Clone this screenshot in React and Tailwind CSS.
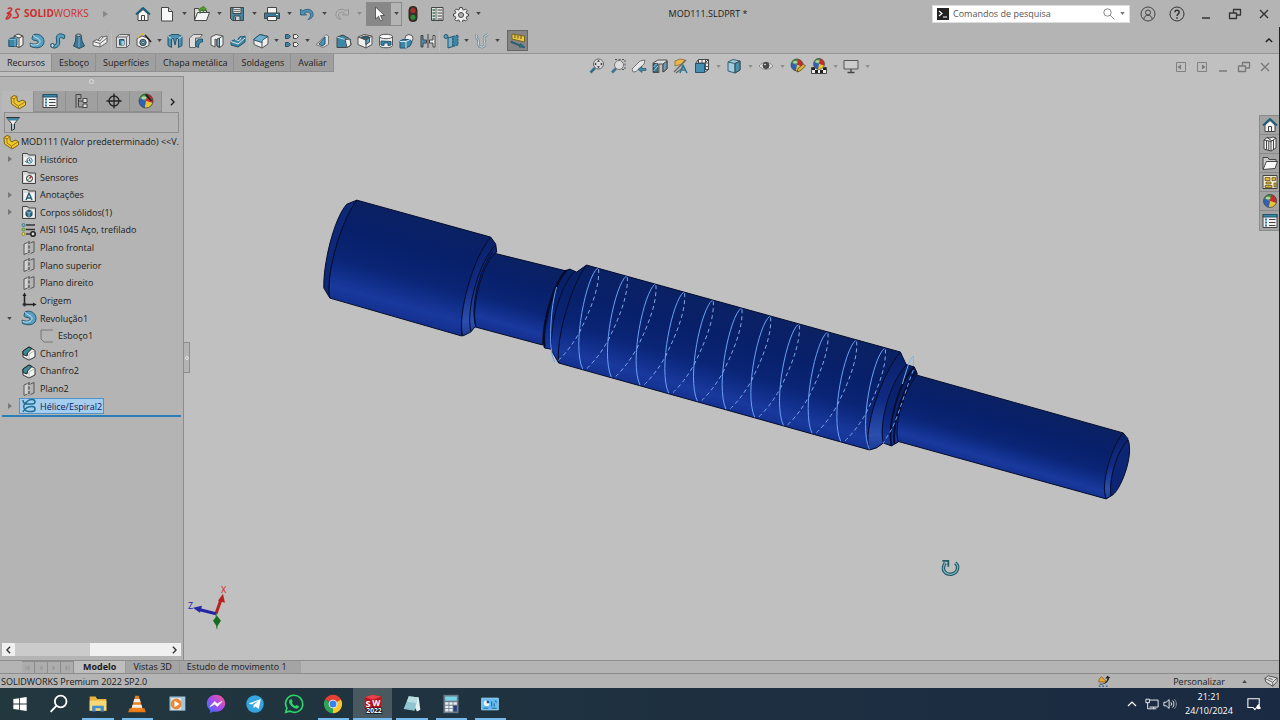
import React, { useState } from "react";

const Icon = ({ children, className = "h-4 w-4", viewBox = "0 0 16 16" }) => (
  <svg
    viewBox={viewBox}
    className={`shrink-0 ${className}`}
    fill="none"
    stroke="#444"
    strokeWidth="1"
    strokeLinejoin="round"
    aria-hidden="true"
  >
    {children}
  </svg>
);

const Caret = ({ faded }) => (
  <svg viewBox="0 0 6 4" className={`w-[5px] h-[3px] ${faded ? "opacity-40" : ""}`} aria-hidden="true">
    <path d="M0 0h6L3 4z" fill="#444" />
  </svg>
);

const ColorBall = ({ cx = 8, cy = 8, r = 6.5 }) => (
  <g transform={`translate(${cx} ${cy}) scale(${r})`} stroke="none">
    <path d="M0 0L-.9-.4A1 1 0 0 1 .2-1z" fill="#3a9a3a" />
    <path d="M0 0L.2-1A1 1 0 0 1 .95 .3z" fill="#c92a2a" />
    <path d="M0 0L.95 .3A1 1 0 0 1-.2 1z" fill="#e8c52f" />
    <path d="M0 0L-.2 1A1 1 0 0 1-.9-.4z" fill="#2f62b5" />
    <circle r="1" stroke="#444" strokeWidth=".12" />
    <ellipse cx="-.3" cy="-.45" rx=".35" ry=".22" fill="#fff" opacity=".6" />
  </g>
);

const Folder = ({ children }) => (
  <Icon>
    <path d="M1.500 14.500v-12h5l1 1.500h7v10.500z" fill="#d9d9d9" stroke="#444" />
    <path d="M3 6h10v7H3z" fill="#f2f2f2" stroke="none" />
    {children}
  </Icon>
);

const icons = {
  home: (
    <Icon>
      <path d="M3 8v6.500h10V8L8 3.500z" fill="#f4f4f4" />
      <path d="M1 8.500L8 2l7 6.500" stroke="#1c5f78" strokeWidth="2" />
      <path d="M6.500 14.500v-5h3v5" />
    </Icon>
  ),
  newDoc: (
    <Icon>
      <path d="M2.500 1.500h7l4 4v9.500h-11z" fill="#f7f7f7" />
      <path d="M9.500 1.500v4h4" fill="#ccc" />
    </Icon>
  ),
  open: (
    <Icon>
      <path d="M.5 14.500v-12h4l1 2h7v3" fill="#dedede" />
      <path d="M.5 14.500l3-8h12l-3 8z" fill="#f5f5f5" />
      <path d="M5 5c0-3 2-3.500 4-3.500V0l3.500 3L9 6V4.200C7 4 6 5 6 8" fill="#4f9d2f" stroke="#2b6b18" strokeWidth=".6" />
    </Icon>
  ),
  save: (
    <Icon>
      <path d="M1.500 1.500h13v13h-11l-2-2z" fill="#4387a6" />
      <path d="M4 1.500h8v6H4z" fill="#ddd" />
      <path d="M5 10h6v4.500H5z" fill="#c5d5dc" />
      <path d="M5 3.500h6M5 5.500h6" stroke="#777" />
      <path d="M6.500 11v3" />
    </Icon>
  ),
  print: (
    <Icon>
      <path d="M3.500 7V1.500h9V7" fill="#f4f4f4" />
      <path d="M.5 7h15v5.500H.5z" fill="#377c9b" />
      <path d="M3.500 10.500h9v4h-9z" fill="#fafafa" />
      <path d="M12 8.500h2" stroke="#fff" />
    </Icon>
  ),
  undo: (
    <Icon>
      <path d="M1.500 3v6h6L5.500 7c3-2 6-.5 6 2 0 2-1 3-2.500 4.500 4-1 5.500-3 5-6C13 3 8 2 3.500 5z" fill="#4c93b5" stroke="#26566f" strokeWidth=".8" />
    </Icon>
  ),
  redo: (
    <Icon className="h-4 w-4 opacity-35">
      <path d="M14.500 3v6h-6l2-2c-3-2-6-.5-6 2 0 2 1 3 2.500 4.500-4-1-5.500-3-5-6C3 3 8 2 12.500 5z" fill="#bbb" stroke="#555" />
    </Icon>
  ),
  pointer: (
    <Icon>
      <path d="M4.500 1v12l3-2.800L9.500 15l2-.8-2-4.700h4z" fill="#fff" strokeWidth=".8" />
    </Icon>
  ),
  traffic: (
    <Icon>
      <rect x="4" y=".5" width="8" height="15" rx="3.500" fill="#3b3028" stroke="#2c2620" />
      <circle cx="8" cy="4.500" r="2.500" fill="#a8322a" stroke="none" />
      <circle cx="8" cy="11.300" r="2.500" fill="#2d8a36" stroke="none" />
    </Icon>
  ),
  list: (
    <Icon>
      <path d="M2.500 1.500h11.500v13H2.500z" fill="#e4e4e4" />
      <path d="M7 1.500v13" stroke="#666" />
      <path d="M3.500 4h2.500M3.500 7h2.500M3.500 10h2.500M3.500 13h2.500" stroke="#277451" strokeWidth="1.500" />
      <path d="M8.500 4H13M8.500 7H13M8.500 10H13M8.500 13H13" stroke="#444" />
    </Icon>
  ),
  gear: (
    <Icon>
      <path d="M6.800 1.500h2.400l.4 1.900 1.300.6 1.700-1 1.600 1.700-1 1.600.5 1.300 1.800.4v2l-1.800.5-.5 1.300 1 1.600-1.600 1.600-1.700-1-1.300.5-.4 1.900H6.800l-.5-1.900-1.200-.5-1.700 1-1.600-1.600 1-1.600-.6-1.300L.5 10V8l1.700-.4.6-1.300-1-1.600L3.400 3l1.700 1 1.200-.6z" fill="#eee" stroke="#444" />
      <circle cx="8" cy="9" r="2.500" fill="#b5b5b5" stroke="#444" />
    </Icon>
  ),
  extrude: (
    <Icon>
      <path d="M6 3l4-2 5 2v9l-4 2.500-5-2z" fill="#efefef" />
      <path d="M11 5v9.500M11 5l4-2M6 3l5 2" />
      <path d="M.8 6.500L3 5h6v7l-2 1.500H.8z" fill="#3c86a6" stroke="#23556c" />
      <path d="M.8 6.500H7v7M7 6.500L9 5" stroke="#8cc4dc" strokeWidth=".8" />
    </Icon>
  ),
  revolve: (
    <Icon>
      <path d="M4 2C9-.5 15 3 15 8.500S9 16.500 1.500 13.500L1 10c4 2 8 1 8-1S3 8 3 5.500z" fill="#58a0c2" stroke="#23556c" />
      <path d="M4 2c1 3 7 3 7 6.500 0 3-5 4.500-9.500 3" stroke="#c5e3f0" />
    </Icon>
  ),
  sweep: (
    <Icon>
      <path d="M1 11c3-1 3 2 5 0s-1-6 1-8.500S12 .5 15 2.500L14 6c-2-1.500-4-2-4.500-.5S11 11 8 13.500 3 15 1 14z" fill="#58a0c2" stroke="#23556c" />
      <ellipse cx="2.500" cy="12.500" rx="1.700" ry="2" fill="#bde0ef" stroke="#23556c" />
    </Icon>
  ),
  loft: (
    <Icon>
      <path d="M5 2h5l1 6 2.500 5L8 15.500 2.500 13 4.500 8z" fill="#3d7795" stroke="#274f63" />
      <ellipse cx="7.500" cy="2.200" rx="2.700" ry="1.200" fill="#a9cfdf" />
      <path d="M8 4v10" stroke="#7fb3ca" />
    </Icon>
  ),
  boundary: (
    <Icon>
      <path d="M1 8.500l4-2 1 .8 3-3.800 2 .5 4-1v6.500l-7 4.500-7-1.500z" fill="#ededed" stroke="#666" />
      <path d="M1 8.500l7 2L15 5M8 10.500V14M6 7.300l2 .7 3-4" stroke="#666" />
    </Icon>
  ),
  cutExtrude: (
    <Icon>
      <path d="M1.500 4l3-2.500h10v10l-3 3h-10z" fill="#ddd" stroke="#666" />
      <path d="M1.500 4h10v10.500M11.500 4l3-2.500" stroke="#666" />
      <path d="M4.500 6.500h4.500V12H4.500z" fill="#3c86a6" stroke="#23556c" />
      <path d="M6.500 8h2.500v4H6.500z" fill="#a5cfe0" stroke="none" />
    </Icon>
  ),
  holeWizard: (
    <Icon>
      <path d="M1 5.500L6 3l7 2.500v7L7 15l-6-2.500z" fill="#eee" stroke="#555" />
      <circle cx="7" cy="9.500" r="3.200" fill="#4c93b5" />
      <circle cx="7" cy="9.500" r="1.200" fill="#fff" />
      <path d="M9 2l6 7" stroke="#222" strokeWidth="1.600" />
      <path d="M3 1l1 1.500M6.500 0v2M1 4h2" stroke="#e6b72a" strokeWidth="1.500" />
    </Icon>
  ),
  cutRevolve: (
    <Icon>
      <path d="M1 3.500L5 1.500h6l4 2v9l-3.500 2V5.500h-2L8 12 6.500 5.500h-2v9L1 12.500z" fill="#4c93b5" stroke="#23556c" />
      <path d="M1 3.500l3.500 2M15 3.500l-3.500 2" stroke="#cfe8f2" />
    </Icon>
  ),
  cutSweep: (
    <Icon>
      <path d="M1.500 5l4-3.500h9l-3 3.500h-4v9.500h-6z" fill="#ddd" stroke="#666" />
      <path d="M7.500 13c0-5 2-7 7-7v3c-2.500 0-4 1.500-4 5.500z" fill="#3c86a6" stroke="#23556c" />
    </Icon>
  ),
  cutLoft: (
    <Icon>
      <path d="M2 4l5-2.500L14 3v9l-3.500 2.500L8 13V7L6 6v8l-4-2z" fill="#eee" stroke="#555" />
      <path d="M10.500 5v9.500M10.500 5L14 3" stroke="#555" />
      <path d="M8 6l2.500-1v9.500L8 13z" fill="#77aec6" />
    </Icon>
  ),
  cutBoundary: (
    <Icon>
      <path d="M1 8.500l4-2 2 1 3-4 2 .5 3-1v6l-7 5-7-2z" fill="#3c86a6" stroke="#23556c" />
      <path d="M1 8.500L8 11l7-6" stroke="#e6e6e6" />
      <path d="M5 6.500l4 1.200 2-3" stroke="#ddd" />
    </Icon>
  ),
  fillet: (
    <Icon>
      <path d="M1 6l6-4.500 8 2V11l-6 4-8-3.500z" fill="#eee" stroke="#555" />
      <path d="M1 6l6-4.500 8 2L11 6c-1.500 1-2 2-2 3.500L1 7z" fill="#6fb0cd" stroke="#23556c" />
      <path d="M9 9v6" stroke="#555" />
    </Icon>
  ),
  pattern: (
    <Icon>
      <path d="M1.500 1.500h3l2 2-2 2h-3zM1.500 9.500h3l2 2-2 2h-3z" fill="#3c86a6" />
      <path d="M9.500 1.500h3l2 2-2 2h-3zM9.500 9.500h3l2 2-2 2h-3z" fill="#eee" />
    </Icon>
  ),
  rib: (
    <Icon>
      <path d="M1 11.500L4 9l7-7.500 2.500 1.500v8.500L8 14.500z" fill="#ddd" stroke="#777" />
      <path d="M4 11l6-7v7l-3 2z" fill="#4c93b5" stroke="#23556c" />
    </Icon>
  ),
  draft: (
    <Icon>
      <path d="M1 4l6-2 7 4 1 6-4 2.500H1z" fill="#3c86a6" stroke="#444" />
      <path d="M1 4l8 2.500L14 6M9 6.500l2 8" stroke="#b9dcea" />
      <path d="M9 6.500L14 6l1 6-4 2.500z" fill="#eee" />
    </Icon>
  ),
  shell: (
    <Icon>
      <path d="M1 4l6-2.500L15 3v8.500L9 15l-8-3.500z" fill="#eee" stroke="#555" />
      <path d="M3.500 4.500L8 3l4.500 1v5L9 7z" fill="#22617c" />
      <path d="M9 7v8M1 4l8 3 6-4" stroke="#555" />
      <path d="M9 7l3.500-2.500V9L9 11.500z" fill="#5aa7c9" />
    </Icon>
  ),
  wrap: (
    <Icon>
      <path d="M1.500 3.500v9c0 3 13 3 13 0v-9" fill="#eee" stroke="#555" />
      <ellipse cx="8" cy="3.500" rx="6.500" ry="2.200" fill="#fafafa" stroke="#555" />
      <path d="M3 8l10 .5V12l-3 .5V10H6v2.500L3 12z" fill="#3c86a6" stroke="#23556c" />
    </Icon>
  ),
  intersect: (
    <Icon>
      <circle cx="10" cy="5.500" r="4" fill="#eee" stroke="#555" />
      <path d="M1 8l3-1.500h7L13 9l-2 4-4 2H1z" fill="#3c86a6" stroke="#23556c" />
      <path d="M1 8.500h6V15M7 8.500l4-2" stroke="#d3eaf4" />
    </Icon>
  ),
  mirror: (
    <Icon>
      <path d="M1 2.500h2V7h3.500v3H3v4H1z" fill="#4c93b5" />
      <path d="M15 2.500h-2V7H9.500v3H13v4h2z" fill="#eee" />
      <path d="M8 1v14" />
    </Icon>
  ),
  refGeometry: (
    <Icon>
      <circle cx="3" cy="3.500" r="2" fill="#58a0c2" stroke="#23556c" />
      <path d="M5 5l5-1.500v10L5 15z" fill="#77b1cb" stroke="#23556c" />
      <path d="M10 3.500L15 2v10l-5 1.500z" fill="#3c86a6" stroke="#23556c" strokeDasharray="2 1" />
    </Icon>
  ),
  curves: (
    <Icon>
      <path d="M3 1.500c-3 4 3 4 1.500 8.500s7 6 6.500 1-3-7 3-9.500" stroke="#6f8792" strokeWidth="2.500" />
      <path d="M3 1.500c-3 4 3 4 1.500 8.500s7 6 6.500 1-3-7 3-9.500" stroke="#e2e8ea" strokeWidth="1" />
    </Icon>
  ),
  instant3d: (
    <Icon>
      <path d="M2 1l12.500 2v6L2 6z" fill="#eac849" stroke="#7b621a" />
      <path d="M5 2v3M8 2.500v3M11 3v3" stroke="#5c4a14" />
      <path d="M1 8l9 4 .5-1.500 4.500 4-6-.5.500-1.200L1 9.500z" fill="#28708f" stroke="#174a60" strokeWidth=".6" />
    </Icon>
  ),
  zoomFit: (
    <Icon>
      <circle cx="9.500" cy="6" r="5" fill="#dcdcdc" stroke="#666" />
      <path d="M6 10l-4.500 4.500" stroke="#2e6d88" strokeWidth="2.500" />
      <path d="M9.500 1.800l1.500 2H8zM9.500 10.200l1.500-2H8zM5.300 6l2-1.500v3zM13.700 6l-2-1.500v3z" fill="#333" stroke="none" />
    </Icon>
  ),
  zoomArea: (
    <Icon>
      <path d="M5 1.500h10v10H9" stroke="#555" strokeDasharray="2 1.500" />
      <circle cx="9" cy="7" r="4.500" fill="#dcdcdc" stroke="#777" />
      <path d="M6 10.500L2 14.500" stroke="#3d7189" strokeWidth="2.500" />
    </Icon>
  ),
  prevView: (
    <Icon>
      <path d="M1 11l8-8 5-1-1 4-8 7.500-3 .5z" fill="#e7e7e7" stroke="#777" />
      <path d="M7 11.500l4-3v2h4v2h-4v2z" fill="#3c86a6" stroke="#23556c" strokeWidth=".6" />
    </Icon>
  ),
  section: (
    <Icon>
      <path d="M1 5l5-3h9v9l-4 3V6H7v8.500H1z" fill="#ddd" stroke="#555" />
      <path d="M1.500 5.500H6v8.500H1.500z" fill="#3f7d99" />
      <path d="M11 6l4-3v8l-4 3z" fill="#6a9db4" />
      <path d="M1.500 9L5 5.500M1.500 13L6 8" stroke="#9bc9dc" />
    </Icon>
  ),
  annotationView: (
    <Icon>
      <path d="M2 3l5-2 5 1-3 4-7 2z" fill="#ebb64a" stroke="#9b7b3a" />
      <path d="M1 14l8-8 4-4M3 15l8-6" stroke="#666" strokeWidth="1.300" />
      <path d="M7 15l3-8 4 8M8.500 12h4.500" stroke="#2f7394" strokeWidth="1.500" />
    </Icon>
  ),
  orientation: (
    <Icon>
      <path d="M4.500 1.500h10v10h-10z" fill="#eee" />
      <path d="M8 1.500v10M11.500 1.500v10M4.500 5h10M4.500 8.500h10" stroke="#555" />
      <path d="M1.500 5.500h9v9h-9z" fill="#4590b2" stroke="#23556c" />
      <path d="M1.500 5.500l3-4M10.500 5.500l4-4M10.500 14.500l4-3" />
    </Icon>
  ),
  displayStyle: (
    <Icon>
      <path d="M2 4l5-2.500L14 3v9l-5 3-7-2z" fill="#9fcbdd" stroke="#3a5f70" />
      <path d="M9 5.500L14 3v9l-5 3z" fill="#4a8fae" />
      <path d="M2 4l7 1.500V15M9 5.500L14 3" stroke="#3a5f70" />
    </Icon>
  ),
  eye: (
    <Icon>
      <path d="M1 8c4-5 10-5 14 0-4 4.500-10 4.500-14 0z" fill="#ddd" stroke="#888" />
      <circle cx="8" cy="7.500" r="3" fill="#4b4b4b" />
      <circle cx="7" cy="6.500" r=".8" fill="#fff" stroke="none" />
    </Icon>
  ),
  appearance: (
    <Icon>
      <ColorBall cx={7} cy={7} r={6} />
      <path d="M7 14l1-3.500L13.500 6l2 2-5.500 5z" fill="#d9b53f" stroke="#594618" strokeWidth=".8" />
    </Icon>
  ),
  scene: (
    <Icon>
      <path d="M.5 9.500h15v6H.5z" fill="#eee" />
      <path d="M1 10h3v2H1zM12 10h3v2h-3zM4 12h3v3H4zM9 12h3v3H9z" fill="#222" stroke="none" />
      <ColorBall cx={8} cy={6} r={5.500} />
    </Icon>
  ),
  monitor: (
    <Icon>
      <path d="M1 2.500h14v8.500H1z" fill="#ccc" stroke="#555" />
      <path d="M8 11v3M4.500 14.500h7" stroke="#444" strokeWidth="1.300" />
    </Icon>
  ),
  part: (
    <Icon>
      <path d="M1 3.500L4 1.500l3 1v4l2 1.500 3-2 3.500 1.500V11L9 15 1.500 10z" fill="#f0c92e" stroke="#7b611a" />
      <path d="M1 3.500l3 1.500v4l4.500 3V15M4 5l3-2.500M8.500 12l7-4.500" stroke="#987a1d" />
    </Icon>
  ),
  propertyTab: (
    <Icon>
      <path d="M1 1.500h14v13H1z" fill="#f0f0f0" />
      <path d="M1 1.500h14v2.500H1z" fill="#3c86a6" stroke="#23556c" />
      <path d="M3 6.500h2M3 9.500h2M3 12.500h2" stroke="#2f7d9d" strokeWidth="1.800" />
      <path d="M7 6.500h6.500M7 9.500h6.500M7 12.500h6.500" />
    </Icon>
  ),
  configTab: (
    <Icon>
      <path d="M2 1.500h5v4H4.500M4.500 5v9H9M4.500 8H10M2 1.500V15" stroke="#444" />
      <path d="M9 5.500h4v4H9zM9 11h4v3.500H9z" fill="#e3e3e3" stroke="#444" />
    </Icon>
  ),
  targetTab: (
    <Icon>
      <circle cx="8" cy="8" r="5" stroke="#222" strokeWidth="1.300" />
      <path d="M8 .5v15M.5 8h15" stroke="#222" strokeWidth="1.300" />
    </Icon>
  ),
  ball: (
    <Icon>
      <ColorBall />
    </Icon>
  ),
  displayTab: (
    <Icon>
      <ColorBall r={7} />
      <path d="M7 2l2-1 5.500 7-2.500-.5z" fill="#222" stroke="none" />
    </Icon>
  ),
  funnel: (
    <Icon>
      <path d="M1.500 2.500h13l-5 6V14l-3 1.500v-7z" fill="#f1f1f1" stroke="#333" />
      <path d="M2 3h12l-2 2.500H4z" fill="#3c86a6" stroke="none" />
      <path d="M8 9v5" stroke="#4c93b5" />
    </Icon>
  ),
  history: (
    <Folder>
      <circle cx="8.500" cy="9.500" r="2.700" stroke="#2d738f" />
      <path d="M4 10l2 1.500 1-2.500M8.500 8v2H10" stroke="#2d738f" />
    </Folder>
  ),
  sensor: (
    <Folder>
      <circle cx="8.500" cy="9.500" r="3" stroke="#222" />
      <path d="M8.500 9.500L10.500 7" stroke="#b0302a" strokeWidth="1.500" />
      <path d="M6 11.500l2-2" stroke="#2f8a45" />
    </Folder>
  ),
  annotations: (
    <Folder>
      <path d="M5 13l3-7 3 7M6 11h4" stroke="#215d77" strokeWidth="1.400" />
    </Folder>
  ),
  solids: (
    <Folder>
      <path d="M5 7.500L8 6l3 1.500v4L8 13l-3-1.500z" fill="#2c7290" stroke="#1d3d4c" />
      <path d="M5 7.500L8 9l3-1.500M8 9v4" stroke="#a8d1e1" strokeWidth=".7" />
    </Folder>
  ),
  material: (
    <Icon>
      <path d="M5 3h9M5 7.500h9" stroke="#333" strokeWidth="1.400" />
      <path d="M5 12h4" stroke="#333" strokeWidth="1.400" />
      <circle cx="2.500" cy="3" r="1.500" fill="#7eb7c9" stroke="#46808f" />
      <circle cx="2.500" cy="7.500" r="1.500" fill="#97c276" stroke="#5c8941" />
      <circle cx="2.500" cy="12" r="1.500" fill="#e7dc57" stroke="#978c27" />
      <circle cx="12" cy="12" r="2.200" fill="#ddd" stroke="#222" strokeWidth="1.600" />
    </Icon>
  ),
  plane: (
    <Icon>
      <path d="M6.500 2.500L3 4v10.500l3.500-1.500" fill="#d3d3d3" stroke="#555" />
      <path d="M9.500 3L13 1.500V12l-3.500 1.500" stroke="#555" />
      <path d="M8 1v14" strokeDasharray="3 1.500" stroke="#333" />
    </Icon>
  ),
  origin: (
    <Icon>
      <path d="M3.500 3v9.500H13" stroke="#222" strokeWidth="1.500" />
      <path d="M1.500 4l2-3.500 2 3.500zM12 10.500l3.500 2-3.500 2z" fill="#222" stroke="none" />
      <circle cx="3.500" cy="12.500" r="1.500" fill="#222" />
    </Icon>
  ),
  sketch: (
    <Icon>
      <path d="M14 2H2v9l3 3h9" stroke="#777" />
    </Icon>
  ),
  chamfer: (
    <Icon>
      <path d="M2 6l6-4 6 3.500V12l-6 3-6-3z" fill="#f3f3f3" stroke="#333" />
      <path d="M2 6l6-4 3 1.500L6.500 8l-.5 3-4-1.500z" fill="#3c8b97" stroke="#222" />
      <path d="M8 9l6-3.500M8 9v6" stroke="#999" strokeWidth=".7" />
    </Icon>
  ),
  helix: (
    <Icon>
      <path d="M2 2c0 3 2 4 4 4h5c4 0 4-4.500 0-4.500S5 4 3 7M3 7c-1 3 1 6.500 4 6.500h4c4 0 4-5 0-5S4 10 2 14" stroke="#1f6f94" strokeWidth="1.500" />
    </Icon>
  ),
  books: (
    <Icon>
      <path d="M2 4l3-2.500 3 .5 3-1 3 1v10l-5 3-7-2z" fill="#f2f2f2" />
      <path d="M2 4l7 1.500V15M9 5.500L14 2M4.500 4.500v9.500M6.800 5v9.500M5 1.500l5 3.500M11.500 4v9.500" />
    </Icon>
  ),
  folderOpen: (
    <Icon>
      <path d="M1 14V2.500h5l1 2h7V7" fill="#ccc" />
      <path d="M1 14.500L4.500 6.500h11L13 13.500z" fill="#fafafa" />
    </Icon>
  ),
  palette: (
    <Icon>
      <path d="M1 1.500h14v13H1z" fill="#f4ecd0" />
      <path d="M3 3.500h5v3H3zM10 3.500h3.500v3H10zM4 8h5v2H4zM3 11.500h7v2H3zM12 9h2v4h-2z" fill="#dcb73a" stroke="#59491c" strokeWidth=".7" />
    </Icon>
  ),
  user: (
    <Icon>
      <circle cx="8" cy="8" r="7" stroke="#444" />
      <circle cx="8" cy="6.500" r="2.500" stroke="#444" />
      <path d="M4 13c0-5 8-5 8 0" stroke="#444" />
    </Icon>
  ),
  help: (
    <Icon>
      <circle cx="8" cy="8" r="7" stroke="#333" />
      <path d="M6 6.300c0-3 4.200-2.500 4.200 0C10.200 8 8 8 8 10" stroke="#333" strokeWidth="1.500" />
      <path d="M8 11.200v1.500" stroke="#333" strokeWidth="1.500" />
    </Icon>
  ),
  min: (
    <Icon>
      <path d="M4 12h8" stroke="#333" strokeWidth="1.500" />
    </Icon>
  ),
  restore: (
    <Icon>
      <path d="M2.500 7h7v5.500h-7zM6.500 7V3.500h7V9h-4" stroke="#333" strokeWidth="1.300" />
    </Icon>
  ),
  close: (
    <Icon>
      <path d="M4 4l8 8M12 4l-8 8" stroke="#333" strokeWidth="1.400" />
    </Icon>
  ),
  paneLeft: (
    <Icon>
      <path d="M3.500 3.500h9v9h-9z" />
      <path d="M8 5.500v5L4.500 8z" fill="#333" stroke="none" />
    </Icon>
  ),
  paneRight: (
    <Icon>
      <path d="M3.500 3.500h9v9h-9z" />
      <path d="M8 5.500v5L11.500 8z" fill="#333" stroke="none" />
    </Icon>
  ),
  rebuild: (
    <Icon className="h-[14px] w-[14px]">
      <path d="M2 9c0-3 1-4 3-6 1 2 2 1 3 3l3 3H2z" fill="#eda52c" stroke="#7a5012" strokeWidth=".8" />
      <path d="M3 11c5 1 8-2 9-6H9.500L12 2l3.500 2.500H14C13 9 9 12.500 3 12z" fill="#222" stroke="none" />
      <path d="M2 14h2M6 14h2M10 14h2" stroke="#2f70a5" strokeWidth="1.500" />
    </Icon>
  ),
  tag: (
    <Icon className="h-[14px] w-[14px]">
      <path d="M1 5l4-3 10 2.500v4L10 14 2 9z" fill="#ddd" stroke="#444" />
      <path d="M1 5l9 4.500V14M10 9.500l5-5M5 4.500l5 2" stroke="#555" />
    </Icon>
  ),
};

const quickAccess = [
  { icon: "newDoc", label: "Novo" },
  { icon: "open", label: "Abrir" },
  { icon: "save", label: "Salvar" },
  { icon: "print", label: "Imprimir" },
  { icon: "undo", label: "Desfazer" },
  { icon: "redo", label: "Refazer", faded: true },
];

const features = [
  ["extrude", "revolve", "sweep", "loft", "boundary", "|"],
  ["cutExtrude", "holeWizard", "v", "cutRevolve", "cutSweep", "cutLoft", "cutBoundary", "|"],
  ["fillet", "v", "pattern", "v", "rib", "draft", "shell", "wrap", "intersect", "mirror", "|"],
  ["refGeometry", "v", "curves", "v"],
].flat();

const headsUp = [
  "zoomFit", "zoomArea", "prevView", "section", "annotationView", "orientation", "v",
  "displayStyle", "v", "eye", "v", "appearance", "scene", "v", "monitor", "v",
];

const commandTabs = ["Recursos", "Esboço", "Superfícies", "Chapa metálica", "Soldagens", "Avaliar"];

const managerTabs = ["part", "propertyTab", "configTab", "targetTab", "displayTab"];

const tree = [
  { icon: "history", label: "Histórico", arrow: "closed" },
  { icon: "sensor", label: "Sensores" },
  { icon: "annotations", label: "Anotações", arrow: "closed" },
  { icon: "solids", label: "Corpos sólidos(1)", arrow: "closed" },
  { icon: "material", label: "AISI 1045 Aço, trefilado" },
  { icon: "plane", label: "Plano frontal" },
  { icon: "plane", label: "Plano superior" },
  { icon: "plane", label: "Plano direito" },
  { icon: "origin", label: "Origem" },
  { icon: "revolve", label: "Revolução1", arrow: "open" },
  { icon: "sketch", label: "Esboço1", child: true },
  { icon: "chamfer", label: "Chanfro1" },
  { icon: "chamfer", label: "Chanfro2" },
  { icon: "plane", label: "Plano2" },
  { icon: "helix", label: "Hélice/Espiral2", arrow: "closed" },
];

const taskPane = ["home", "books", "folderOpen", "palette", "ball", "propertyTab"];

const IconButton = ({ icon, label, className = "w-5" }) => (
  <button aria-label={label || icon} className={`flex h-5 shrink-0 items-center justify-center ${className}`}>
    {icons[icon]}
  </button>
);

const DropButton = ({ faded, className = "w-[14px]" }) => (
  <button aria-label="Mais opções" className={`flex h-5 shrink-0 items-center justify-center ${className}`}>
    <Caret faded={faded} />
  </button>
);

function TitleBar() {
  return (
    <header className="relative flex h-[27px] shrink-0 items-center bg-[#b4b4b4]">
      <div className="flex w-[133px] shrink-0 items-center pl-1 text-[#c9302c]">
        <svg viewBox="0 0 20 18" className="h-4 w-[18px]" fill="none" stroke="#c9302c" strokeWidth="1.700" aria-hidden="true">
          <path d="M4 3c4-2 6 0 3 3L3 8.500c5-1 6 1 3 4.500-2 2.500-5 2-3 0l3-4" />
          <path d="M18 4c-3-1.500-6 0-4.500 2.500l2 3c1.500 3-2 4.500-6 3.500" />
        </svg>
        <span className="ml-[2px] text-[10px]">
          <b>SOLID</b>WORKS
        </span>
        <svg viewBox="0 0 6 8" className="ml-[14px] h-2 w-[5px]" aria-hidden="true">
          <path d="M0 0l6 4-6 4z" fill="#888" />
        </svg>
      </div>
      <IconButton icon="home" label="Início" />
      <div className="ml-1 flex gap-px">
        {quickAccess.map((item) => (
          <div key={item.icon} className="flex">
            <IconButton icon={item.icon} label={item.label} />
            <DropButton faded={item.faded} />
          </div>
        ))}
      </div>
      <div className="flex h-6 border border-[#8a8a8a]">
        <button aria-label="Selecionar" className="flex w-6 items-center justify-center bg-[#888]">
          {icons.pointer}
        </button>
        <button aria-label="Opções de seleção" className="flex w-[10px] items-center justify-center">
          <Caret />
        </button>
      </div>
      <div className="ml-px flex gap-1">
        <IconButton icon="traffic" label="Reconstruir" />
        <IconButton icon="list" label="Propriedades do arquivo" />
        <IconButton icon="gear" label="Opções" />
      </div>
      <DropButton />
      <h1 className="pointer-events-none absolute inset-x-0 mr-[-136px] text-center text-[9px]">MOD111.SLDPRT *</h1>
      <div className="ml-auto flex h-[18px] w-[198px] shrink-0 items-center border border-[#ddd] bg-white px-1">
        <svg viewBox="0 0 12 12" className="h-3 w-3" fill="none" aria-hidden="true">
          <path d="M0 0h12v12H0z" fill="#222" />
          <path d="M2 3l3 2.500L2 8M6 9h4" stroke="#fff" strokeWidth="1.200" />
        </svg>
        <input
          aria-label="Comandos de pesquisa"
          placeholder="Comandos de pesquisa"
          className="ml-1 min-w-0 flex-1 bg-transparent text-[9px] text-[#444] outline-none placeholder:text-[#555]"
        />
        <svg viewBox="0 0 12 12" className="h-3 w-3" fill="none" stroke="#888" aria-hidden="true">
          <circle cx="4.500" cy="4.500" r="3.700" />
          <path d="M7.200 7.200L11.500 11.500" />
        </svg>
        <span className="ml-[5px]">
          <svg viewBox="0 0 6 4" className="h-[3px] w-[5px]" aria-hidden="true">
            <path d="M0 0h6L3 4z" fill="#777" />
          </svg>
        </span>
      </div>
      <div className="ml-[3px] mr-[2px] flex">
        {["user", "help", "min", "restore", "close"].map((name) => (
          <IconButton key={name} icon={name} className="w-[29px]" />
        ))}
      </div>
    </header>
  );
}

function FeatureBar() {
  return (
    <div className="flex h-[27px] shrink-0 items-center border-b border-[#949494] bg-[#b4b4b4] pl-[5px] pt-px">
      {features.map((name, i) => {
        if (name === "|") return <span key={i} className="h-5 w-[2px] border-r border-[#bfbfbf]" />;
        if (name === "v") return <DropButton key={i} className="w-[10px]" />;
        return <IconButton key={i} icon={name} className="w-[21px]" />;
      })}
      <button aria-label="Instant3D" className="ml-[5px] flex h-[21px] w-[21px] items-center justify-center border border-[#666] bg-[#858585]">
        {icons.instant3d}
      </button>
      <button aria-label="Recolher" className="ml-auto mr-[6px]">
        <svg viewBox="0 0 10 6" className="h-[5px] w-2" fill="none" stroke="#222" strokeWidth="1.800" aria-hidden="true">
          <path d="M1 5l4-4 4 4" />
        </svg>
      </button>
    </div>
  );
}

function CommandTabs() {
  const [active, setActive] = useState("Recursos");

  return (
    <div className="relative flex h-[22px] shrink-0 items-start justify-between bg-[#c0c0c0]">
      <nav className="flex h-[18px]">
        {commandTabs.map((tab) => (
          <button
            key={tab}
            onClick={() => setActive(tab)}
            className={`border-b border-r border-[#8f8f8f] pl-[7px] pr-[6px] text-[9px] leading-none font-medium text-[#222] ${
              active === tab ? "bg-[#b8b8b8]" : "bg-[#a0a0a0]"
            }`}
          >
            {tab}
          </button>
        ))}
      </nav>
      <div className="absolute inset-x-0 ml-[180px] flex justify-center pt-[2px]">
        {headsUp.map((name, i) =>
          name === "v" ? (
            <DropButton key={i} faded className="w-[11px]" />
          ) : (
            <IconButton key={i} icon={name} className="w-[21px]" />
          )
        )}
      </div>
      <div className="relative mr-1 flex pt-[3px] opacity-50">
        {["paneLeft", "paneRight", "min", "restore", "close"].map((name) => (
          <IconButton key={name} icon={name} label={`Documento ${name}`} className="w-[21px]" />
        ))}
      </div>
    </div>
  );
}

function TreeRow({ item, selected, onSelect }) {
  return (
    <li className={`flex items-center ${item.child ? "pl-[18px]" : ""}`}>
      <span className="flex w-[19px] shrink-0 justify-center">
        {item.arrow === "closed" && (
          <svg viewBox="0 0 4 6" className="h-[6px] w-1" aria-hidden="true">
            <path d="M0 0l4 3-4 3z" fill="#777" />
          </svg>
        )}
        {item.arrow === "open" && <Caret />}
      </span>
      <button
        onClick={onSelect}
        className={`flex h-4 items-center gap-[3px] whitespace-nowrap border px-px leading-none ${
          selected ? "border-[#4f93c8] bg-[#a5cdee] text-[#10185c]" : "border-transparent"
        }`}
      >
        {icons[item.icon]}
        {item.label}
      </button>
    </li>
  );
}

function FeatureManager() {
  const [selected, setSelected] = useState("Hélice/Espiral2");

  return (
    <aside className="flex w-[184px] shrink-0 flex-col border-r border-t border-[#8c8c8c] bg-[#b4b4b4] text-[9px] text-[#1a1a1a]">
      <div className="flex h-[14px] items-start justify-center pt-[2px]">
        <span className="h-[5px] w-[5px] rounded-full border border-[#ddd]" />
      </div>
      <div className="flex h-[21px] pl-[2px]">
        {managerTabs.map((name, i) => (
          <button
            key={name}
            aria-label={name}
            className={`flex w-8 items-center justify-center border-r border-[#8f8f8f] ${
              i === 0 ? "bg-[#b8b8b8]" : "border-b bg-[#a0a0a0]"
            }`}
          >
            {icons[name]}
          </button>
        ))}
        <button aria-label="Mais abas" className="flex flex-1 items-center justify-center">
          <svg viewBox="0 0 6 10" className="h-2 w-[5px]" fill="none" stroke="#222" strokeWidth="1.800" aria-hidden="true">
            <path d="M1 1l4 4-4 4" />
          </svg>
        </button>
      </div>
      <div className="mx-1 flex h-[21px] items-center border border-[#8c8c8c]">
        {icons.funnel}
        <input aria-label="Filtrar" className="min-w-0 flex-1 bg-transparent outline-none" />
      </div>
      <ul className="grid h-[282px] shrink-0 auto-rows-fr">
        <li className="flex items-center gap-[2px] pl-[3px] whitespace-nowrap">
          {icons.part}
          MOD111 (Valor predeterminado) &lt;&lt;V.
        </li>
        {tree.map((item) => (
          <TreeRow
            key={item.label}
            item={item}
            selected={selected === item.label}
            onSelect={() => setSelected(item.label)}
          />
        ))}
      </ul>
      <div className="mx-[2px] h-[2px] bg-[#2a7fb8]" />
      <div className="mx-[2px] mb-1 mt-auto flex h-[13px] items-center bg-[#f0f0f0]">
        <button aria-label="Rolar para a esquerda" className="flex w-[13px] justify-center">
          <svg viewBox="0 0 6 10" className="h-2 w-[5px]" fill="none" stroke="#333" strokeWidth="1.800" aria-hidden="true">
            <path d="M5 1L1 5l4 4" />
          </svg>
        </button>
        <div className="h-full w-[75px] bg-[#cbcbcb]" />
        <button aria-label="Rolar para a direita" className="ml-auto flex w-[13px] justify-center">
          <svg viewBox="0 0 6 10" className="h-2 w-[5px]" fill="none" stroke="#333" strokeWidth="1.800" aria-hidden="true">
            <path d="M1 1l4 4-4 4" />
          </svg>
        </button>
      </div>
    </aside>
  );
}

const shade = [
  ["0", "#0a2163"],
  ["0.3", "#08206a"],
  ["0.6", "#0a2576"],
  ["0.75", "#112f8b"],
  ["0.88", "#19399d"],
  ["1", "#143190"],
];

const cylinders = [
  { id: "head", x1: 357, y1: 200, x2: 330, y2: 298 },
  { id: "neck", x1: 497, y1: 252, x2: 476, y2: 325 },
  { id: "body", x1: 587, y1: 265, x2: 559, y2: 363 },
  { id: "tail", x1: 918, y1: 375, x2: 899, y2: 441 },
];

function Shaft() {
  return (
    <svg viewBox="184 76 1096 584" className="absolute inset-0 h-full w-full" fill="none" role="img" aria-label="MOD111">
      <defs>
        {cylinders.map(({ id, ...line }) => (
          <linearGradient key={id} id={id} gradientUnits="userSpaceOnUse" {...line}>
            {shade.map(([offset, color]) => (
              <stop key={offset} offset={offset} stopColor={color} />
            ))}
          </linearGradient>
        ))}
        <linearGradient id="chamferShade" x1="0" y1="0" x2="0" y2="1">
          <stop offset="0" stopColor="#0a2168" />
          <stop offset="0.5" stopColor="#102b83" />
          <stop offset="0.85" stopColor="#2c4fb0" />
          <stop offset="1" stopColor="#1a3a96" />
        </linearGradient>
      </defs>
      <g stroke="#040c2b" strokeWidth="1" strokeLinejoin="round">
        {/* tail */}
        <path d="M917 375L1124 433C1113 448 1103 480 1107 499L897 441C893 425 905 388 917 375z" fill="url(#tail)" />
        <path d="M1124 433L1129 439C1117 454 1110 480 1112 496L1107 499C1101 485 1112 447 1124 433z" fill="url(#chamferShade)" />
        <path d="M1129 440C1118 450 1109 481 1112 496C1121 492 1135 456 1129 440z" fill="#0c2675" />
        {/* right collar */}
        <path d="M905 364L915 367L918 374C904 392 894 426 899 442L892 446L884 443C878 424 890 380 905 364z" fill="url(#body)" />
        <path d="M915 367C899 383 888 425 892 446M917 371C902 389 893 425 895 444" strokeWidth="1.800" />
        {/* neck */}
        <path d="M490 252L567 271C552 286 542 325 543 345L472 326C467 306 477 268 490 252z" fill="url(#neck)" />
        <path d="M565 271L570 269L577 272L587 265C573 285 557 335 559 363L551 349L545 348C540 336 550 288 565 271z" fill="url(#body)" />
        <path d="M567 270C552 287 542 329 545 347" strokeWidth="2" />
        <path d="M575 271C560 287 550 325 552 350" />
        {/* head */}
        <path d="M357 200L491 237C475 256 459 309 462 336L330 298C325 280 339 224 357 200z" fill="url(#head)" />
        <path d="M357 200L347 204C334 218 323 265 324 288L330 298C325 280 339 224 357 200z" fill="#0d2877" />
        <path d="M491 237L496 244L497 252C484 260 471 305 476 326L471 332L463 336C457 315 474 256 491 237z" fill="url(#chamferShade)" />
        <path d="M496 245C480 260 466 308 471 331" />
        <path d="M493 252C480 268 470 308 476 326" />
        {/* threaded body */}
        <path d="M587 265L901 352C883 374 864 428 870 450L559 363C556 340 571 285 587 265z" fill="url(#body)" />
        <path d="M901 352L907 365C890 383 879 425 884 443Q878 449 870 450C863 430 883 373 901 352z" fill="url(#chamferShade)" />
      </g>
      <g stroke="#6aa2f5" strokeWidth="1">
        <path d="M557 287C551 305 548 350 555 362" />
        {Array.from({ length: 11 }, (_, i) => (
          <g key={i} transform={`translate(${i * 28.7} ${i * 8.05})`}>
            <path d="M598 268C587 276 572 345 583 369" />
            <path d="M599 269C600 285 593 303 587 317L580 332Q570 350 557 362" strokeDasharray="4 3" stroke="#7fa9e8" />
          </g>
        ))}
        <path d="M903 384C907 370 911 358 914 356L914 366" stroke="#78b6e8" />
        <path d="M914 370C908 385 901 410 893 428L884 443" strokeDasharray="4 3" />
      </g>
      {/* axis triad */}
      <g strokeWidth="3">
        <path d="M216 614L221 600" stroke="#b81f1f" />
        <path d="M223 594L218 601L225 603z" fill="#b81f1f" />
        <path d="M216 614L200 610" stroke="#2424a6" />
        <path d="M193 608L202 606L200 613z" fill="#2424a6" />
        <path d="M216 613L217 629" stroke="#176b1c" strokeWidth="1" />
        <path d="M213 621L217 616L221 621L217 627z" fill="#176b1c" />
      </g>
      <text x="221" y="593" fill="#d22" className="font-sans text-[9px]">X</text>
      <text x="188" y="609" fill="#22b" className="font-sans text-[9px]">Z</text>
      {/* rotate cursor */}
      <path d="M946 563C941 571 947 575 952 574.500C959 573 960 566 956 563" stroke="#235b68" strokeWidth="3.500" />
      <path d="M946 563C941 571 947 575 952 574.500C959 573 960 566 956 563" stroke="#78b0bb" strokeWidth="1.300" />
      <path d="M943 561H949V567" stroke="#235b68" strokeWidth="1.800" />
    </svg>
  );
}

function Viewport() {
  return (
    <main className="relative min-w-0 flex-1 bg-[#c0c0c0]">
      <Shaft />
      <button aria-label="Recolher painel" className="absolute left-0 top-[266px] flex h-[31px] w-[6px] items-center justify-center border border-l-0 border-[#8c8c8c] bg-[#b4b4b4]">
        <span className="h-1 w-1 rounded-full border border-[#e2e2e2]" />
      </button>
      <div className="absolute right-0 top-[39px] w-5 border border-r-0 border-[#8a8a8a] bg-[#a3a3a3]">
        {taskPane.map((name) => (
          <button key={name} aria-label={`Painel ${name}`} className="flex h-[19px] w-full items-center justify-center border-b border-[#8a8a8a] last:border-b-0">
            {icons[name]}
          </button>
        ))}
      </div>
    </main>
  );
}

function ModelTabs() {
  return (
    <div className="flex h-[14px] shrink-0 border-y border-[#8c8c8c] bg-[#b4b4b4] pl-[22px] text-[9px] leading-none">
      {["Primeira", "Anterior", "Próxima", "Última"].map((name, i) => (
        <button key={name} aria-label={name} className="flex w-[13px] items-center justify-center border-r border-t border-[#8c8c8c] bg-[#adadad]">
          <svg viewBox="0 0 8 8" className="h-[6px] w-[6px]" aria-hidden="true">
            <path d={i < 2 ? "M6 0v8L2 4z" : "M2 0v8l4-4z"} fill="#999" />
            {i === 0 && <path d="M1 0v8" stroke="#999" />}
            {i === 3 && <path d="M7 0v8" stroke="#999" />}
          </svg>
        </button>
      ))}
      <button className="bg-[#bebebe] px-[9px] pb-px font-bold">Modelo</button>
      <button className="border-x border-[#999] bg-[#a4a4a4] px-[7px] pb-px">Vistas 3D</button>
      <button className="bg-[#a4a4a4] pl-[7px] pr-[14px] pb-px">Estudo de movimento 1</button>
    </div>
  );
}

function StatusBar() {
  return (
    <footer className="flex h-[14px] shrink-0 items-center bg-[#b4b4b4] pl-px text-[9px] leading-none text-[#1a1a1a]">
      <span>SOLIDWORKS Premium 2022 SP2.0</span>
      <div className="ml-auto flex items-center">
        {icons.rebuild}
        <button className="ml-[62px]">Personalizar</button>
        <svg viewBox="0 0 6 4" className="mx-[17px] h-[3px] w-[5px]" aria-hidden="true">
          <path d="M0 4h6L3 0z" fill="#444" />
        </svg>
        <button aria-label="Tags" className="mr-px">
          {icons.tag}
        </button>
      </div>
    </footer>
  );
}

const AppIcon = ({ children }) => (
  <svg viewBox="0 0 24 24" className="h-5 w-5" fill="none" aria-hidden="true">
    {children}
  </svg>
);

const taskbarApps = [
  {
    name: "Iniciar",
    icon: <path d="M4 6l7-1v6.500H4zM12 4.800L20 3.500v8h-8zM4 12.500h7V19l-7-1zM12 12.500h8v8l-8-1.300z" fill="#fff" />,
  },
  {
    name: "Pesquisar",
    icon: (
      <g stroke="#fff" strokeWidth="2.200">
        <circle cx="14" cy="9" r="7" />
        <path d="M9 14l-7 7.500" />
      </g>
    ),
  },
  {
    name: "Explorador de Arquivos",
    running: true,
    icon: (
      <>
        <path d="M2 3h7l2 3h11v14H2z" fill="#e9b540" />
        <path d="M2 8h20v12H2z" fill="#f7d879" />
        <path d="M5 21v-7h14v7h-4v-4H9v4z" fill="#3f8fd0" />
      </>
    ),
  },
  {
    name: "VLC",
    running: true,
    icon: (
      <>
        <path d="M3 17h18l1.500 5h-21z" fill="#e87a16" />
        <path d="M10 2h4l5 17c-3 2-11 2-14 0z" fill="#ee831d" />
        <path d="M8.800 6h6.400l1.200 4H7.600zM6.700 13h10.600l1 3.500H5.700z" fill="#f3eee7" />
      </>
    ),
  },
  {
    name: "Reprodutor",
    icon: (
      <>
        <path d="M3 3h19v17H3z" fill="#a4c6d8" />
        <path d="M5 5h12v14H5z" fill="#e0e9ee" />
        <circle cx="11" cy="12" r="6.500" fill="#ec8735" />
        <path d="M9 8l6 4-6 4z" fill="#fff" />
      </>
    ),
  },
  {
    name: "Messenger",
    icon: (
      <>
        <defs>
          <linearGradient id="messenger" x1="0" y1="1" x2="1" y2="0">
            <stop offset="0" stopColor="#2877ff" />
            <stop offset="0.5" stopColor="#a54bf0" />
            <stop offset="1" stopColor="#ff5c84" />
          </linearGradient>
        </defs>
        <path d="M12 1C5 1 1 6 1 11.500c0 3.500 1.500 6 4 8V23l3.500-2c9 2 14.500-4 14.500-9.500S18 1 12 1z" fill="url(#messenger)" />
        <path d="M5 15l5.500-6 3 3L19 9l-5.500 6-3-3z" fill="#fff" stroke="#fff" />
      </>
    ),
  },
  {
    name: "Telegram",
    icon: (
      <>
        <circle cx="12" cy="12" r="10.500" fill="#35a5de" />
        <path d="M4.500 11.500L19 6l-2.500 12-4-3-2 2-.5-3.500 6-5.500-8 4.500z" fill="#fff" />
      </>
    ),
  },
  {
    name: "WhatsApp",
    icon: (
      <>
        <path d="M2 22l1.500-5C-1 9 5 1.500 12 1.500c6 0 10.500 5 10.500 10.500C22.500 19 15 25 7 20.500z" stroke="#2bd566" strokeWidth="2" />
        <path d="M7 7l2-1 1.500 3-1 1.500c1 2 2 3 4 4l1.500-1.300 3 1.500c0 3-3 3.300-5 2.500C9 16 4 10 7 7z" fill="#2bd566" />
      </>
    ),
  },
  {
    name: "Chrome",
    running: true,
    icon: (
      <>
        <path d="M12 12L2.500 6.500A11 11 0 0 1 21.500 6.500z" fill="#e34133" />
        <path d="M12 12L21.500 6.500A11 11 0 0 1 12 23z" fill="#f9c72c" />
        <path d="M12 12V23A11 11 0 0 1 2.500 6.500z" fill="#2fa350" />
        <path d="M12 6.500h9.500" stroke="#e34133" strokeWidth="1" />
        <circle cx="12" cy="12" r="5.200" fill="#fff" />
        <circle cx="12" cy="12" r="4.200" fill="#3d7fea" />
      </>
    ),
  },
  {
    name: "SOLIDWORKS 2022",
    running: true,
    active: true,
    icon: (
      <>
        <path d="M2 4l9-3 11 2v15l-10 4-10-3z" fill="#b8161c" />
        <path d="M2 4l10 3 10-4-11-2z" fill="#e4434a" />
        <path d="M12 7v14" stroke="#780a10" />
        <text x="3" y="15" fontSize="11" fontWeight="700" fill="#fff">S</text>
        <text x="11" y="14" fontSize="10" fontWeight="700" fill="#fff">W</text>
        <text x="4" y="23" fontSize="8" fontWeight="700" fill="#fff" stroke="#111" strokeWidth="2" paintOrder="stroke">2022</text>
      </>
    ),
  },
  {
    name: "Bloco de Notas",
    running: true,
    icon: (
      <>
        <path d="M8 3l12 1 2 15-4 2z" fill="#e4eff0" />
        <path d="M8 3l11 1-4 16-13-2z" fill="#8fc5cf" />
        <path d="M8 3l11 1-2 7-11-2z" fill="#b9dde2" />
      </>
    ),
  },
  {
    name: "Calculadora",
    running: true,
    icon: (
      <>
        <path d="M3 1h18v22H3z" fill="#6c7c89" />
        <path d="M5 3h14v5H5z" fill="#77d4e6" />
        <path d="M5 10h4v3H5zM10 10h4v3h-4zM5 14h4v3H5zM10 14h4v3h-4zM5 18h4v3H5zM10 18h4v3h-4zM15 10h4v3h-4z" fill="#e7edf1" />
        <path d="M15 14h4v7h-4z" fill="#243f80" />
      </>
    ),
  },
  {
    name: "Painel",
    running: true,
    icon: (
      <>
        <path d="M2 5h20v14H2z" fill="#64bdf1" stroke="#a6dfff" />
        <circle cx="8" cy="11" r="3.500" fill="#e9f6ff" />
        <path d="M8 11V7.500A3.500 3.500 0 0 1 11.500 11z" fill="#225a8c" />
        <path d="M4 17h6M14 15V9M17 15v-4M14 17h6M18 8l2 2" stroke="#226ba8" strokeWidth="1.300" />
      </>
    ),
  },
];

function Taskbar() {
  return (
    <div className="flex h-8 shrink-0 items-stretch justify-between bg-linear-to-r from-[#22373e] to-[#1a2a42] text-white">
      <nav className="grid w-[510px] grid-cols-13">
        {taskbarApps.map((app) => (
          <button
            key={app.name}
            aria-label={app.name}
            className={`relative flex items-center justify-center ${app.active ? "bg-[#48595f]" : ""}`}
          >
            <AppIcon>{app.icon}</AppIcon>
            {app.running && (
              <span className={`absolute bottom-0 h-[2px] bg-[#76b9ed] ${app.active ? "inset-x-0" : "inset-x-1"}`} />
            )}
          </button>
        ))}
      </nav>
      <div className="flex items-center pr-[19px]">
        <svg viewBox="0 0 10 6" className="h-[6px] w-[10px]" fill="none" stroke="#fff" strokeWidth="1.200" aria-hidden="true">
          <path d="M1 5l4-4 4 4" />
        </svg>
        <svg viewBox="0 0 16 16" className="ml-2 h-[14px] w-[14px]" fill="none" stroke="#fff" aria-hidden="true">
          <path d="M5 3.500h10v8H5M1 2.500h4v4H1zM3 6.500v7h10M10 11.500v2" />
        </svg>
        <svg viewBox="0 0 16 16" className="ml-1 h-[14px] w-[14px]" fill="none" stroke="#fff" aria-hidden="true">
          <path d="M1 6h2.500L7 3v10L3.500 10H1zM9 6c1 1 1 3 0 4M11 4c2 2 2 6 0 8" />
          <path d="M13 2.500c3 3 3 8 0 11" opacity=".5" />
        </svg>
        <div className="mx-2 w-12 text-center text-[9px] leading-[14px]">
          <div>21:21</div>
          <div>24/10/2024</div>
        </div>
        <svg viewBox="0 0 16 16" className="ml-[6px] h-[14px] w-[14px]" fill="none" stroke="#fff" strokeWidth="1.200" aria-hidden="true">
          <path d="M1 2h13v10h-3l-2 2.500L7 12H1z" />
          <path d="M14 8c-4 1-4 6-1 6 2 0 3-1 3-2-2 0-3-2-2-4z" fill="#fff" stroke="none" />
        </svg>
      </div>
    </div>
  );
}

function App() {
  return (
    <div className="flex h-screen flex-col overflow-hidden font-['Open_Sans','Noto_Sans',sans-serif] text-[#1a1a1a]">
      <TitleBar />
      <div className="flex min-h-0 flex-1 flex-col border-r border-[#222]">
        <FeatureBar />
        <CommandTabs />
        <div className="flex min-h-0 flex-1">
          <FeatureManager />
          <Viewport />
        </div>
        <ModelTabs />
        <StatusBar />
      </div>
      <Taskbar />
    </div>
  );
}

export default App;
